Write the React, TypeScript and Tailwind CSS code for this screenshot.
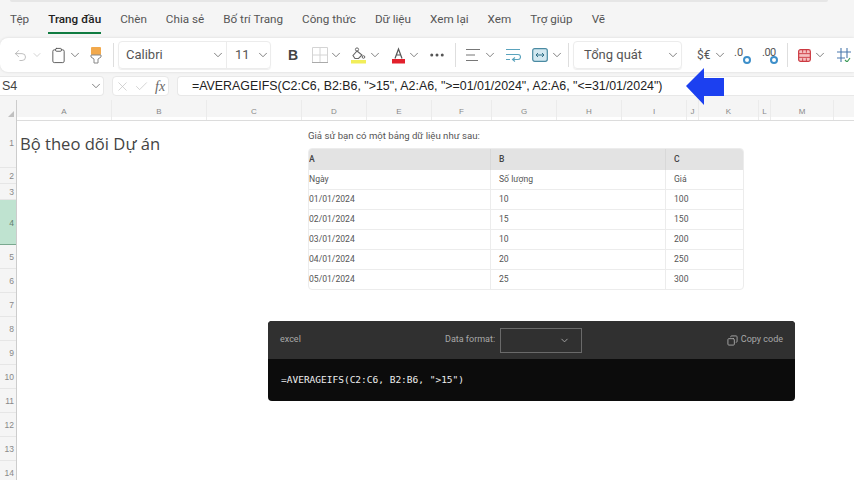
import { Undo2, ChevronDown, Clipboard, X, Check, MoreHorizontal, Copy } from "lucide-react";

const tabs = ["Tệp", "Trang đầu", "Chèn", "Chia sẻ", "Bố trí Trang", "Công thức", "Dữ liệu", "Xem lại", "Xem", "Trợ giúp", "Vẽ"];

const columns = [
  { label: "A", w: "w-[95px]" },
  { label: "B", w: "w-[95px]" },
  { label: "C", w: "w-[95px]" },
  { label: "D", w: "w-[65px]" },
  { label: "E", w: "w-[65px]" },
  { label: "F", w: "w-[60px]" },
  { label: "G", w: "w-[65px]" },
  { label: "H", w: "w-[65px]" },
  { label: "I", w: "w-[65px]" },
  { label: "J", w: "w-[12px]" },
  { label: "K", w: "w-[60px]" },
  { label: "L", w: "w-[12px]" },
  { label: "M", w: "w-[63px]" },
];

const rows = [
  { label: "1", h: "h-[51px]" },
  { label: "2", h: "h-[16px]" },
  { label: "3", h: "h-[16px]" },
  { label: "4", h: "h-[45px]", active: true },
  { label: "5", h: "h-[24px]" },
  { label: "6", h: "h-[24px]" },
  { label: "7", h: "h-[24px]" },
  { label: "8", h: "h-[24px]" },
  { label: "9", h: "h-[24px]" },
  { label: "10", h: "h-[24px]" },
  { label: "11", h: "h-[24px]" },
  { label: "12", h: "h-[24px]" },
  { label: "13", h: "h-[24px]" },
  { label: "14", h: "h-[24px]" },
];

const tableRows = [
  ["Ngày", "Số lượng", "Giá"],
  ["01/01/2024", "10", "100"],
  ["02/01/2024", "15", "150"],
  ["03/01/2024", "10", "200"],
  ["04/01/2024", "20", "250"],
  ["05/01/2024", "25", "300"],
];

const Chevron = ({ className = "" }: { className?: string }) => (
  <ChevronDown size={14} strokeWidth={1.4} className={`shrink-0 text-[#666] ${className}`} />
);

const Divider = ({ className = "" }: { className?: string }) => (
  <div className={`h-[24px] w-px shrink-0 bg-[#dedede] ${className}`} />
);

const Toolbar = () => (
  <div className="flex h-[34px] w-full shrink-0 items-center rounded-l-[8px] bg-white pl-[13px] shadow-[0_0_3px_rgba(0,0,0,0.12)]">
    <Undo2 size={15} strokeWidth={1.3} className="shrink-0 text-[#b0b0b0]" />
    <ChevronDown size={12} strokeWidth={1.4} className="ml-[3px] shrink-0 text-[#c0c0c0]" />
    <Clipboard size={17} strokeWidth={1.3} className="ml-[7px] shrink-0 text-[#555]" />
    <Chevron className="ml-[1px]" />
    <svg width="14" height="18" viewBox="0 0 14 18" className="ml-[7px] shrink-0">
      <rect x="2" y="1" width="10" height="8" rx="1" fill="#f2a94c" />
      <path d="M2 9h10v2l-3 2v4H5v-4l-3-2z" fill="#fff" stroke="#888" strokeWidth="1" />
    </svg>
    <Divider className="ml-[10px] mr-[4px]" />
    <div className="flex h-[28px] w-[153px] shrink-0 items-center rounded-[4px] border border-[#ececec] shadow-[0_1px_1px_rgba(0,0,0,0.07)]">
      <div className="flex h-full w-[108px] items-center border-r border-[#ececec] pl-[7px] pr-[1px]">
        <span className="text-[13px] text-[#555]">Calibri</span>
        <Chevron className="ml-auto" />
      </div>
      <div className="flex h-full flex-1 items-center pl-[8px]">
        <span className="text-[13px] text-[#555]">11</span>
        <Chevron className="ml-auto" />
      </div>
    </div>
    <span className="ml-[17px] w-[10px] shrink-0 font-['Liberation_Sans',sans-serif] text-[14px] font-bold text-[#444]">B</span>
    <svg width="16" height="16" viewBox="0 0 16 16" className="ml-[14px] shrink-0">
      <path d="M.5.5h15v15H.5zM8 .5v15M.5 8h15" fill="none" stroke="#d4d4d4" />
      <path d="M0 15.500h16" stroke="#aaa" />
    </svg>
    <Chevron className="ml-[1px]" />
    <svg width="16" height="17" viewBox="0 0 16 17" className="ml-[8px] shrink-0">
      <circle cx="6" cy="2.500" r="1.600" fill="none" stroke="#666" />
      <path d="M6 4l5 4-3.500 3.500H4L2 8.500z" fill="none" stroke="#666" strokeWidth="1.100" />
      <circle cx="12.500" cy="10" r="1.300" fill="none" stroke="#666" />
      <rect x="0" y="13" width="15" height="3.500" fill="#f2ee5a" />
    </svg>
    <Chevron className="ml-[1px]" />
    <svg width="13" height="17" viewBox="0 0 13 17" className="ml-[10px] shrink-0">
      <path d="M3 11.500L6.500 2l3.500 9.500M4.300 8h4.400" fill="none" stroke="#555" strokeWidth="1.200" />
      <rect x="0" y="12" width="13" height="4.500" fill="#e2202c" />
    </svg>
    <Chevron className="ml-[2px]" />
    <MoreHorizontal size={18} strokeWidth={2} className="ml-[7px] shrink-0 text-[#555]" />
    <Divider className="ml-[9px]" />
    <svg width="15" height="14" viewBox="0 0 15 14" className="ml-[10px] shrink-0">
      <path d="M0 1.500h14M0 7h9M0 12.500h12" fill="none" stroke="#777" strokeWidth="1.200" />
    </svg>
    <Chevron className="ml-[2px]" />
    <svg width="16" height="14" viewBox="0 0 16 14" className="ml-[8px] shrink-0">
      <path d="M1 1.500h14M1 6.500h12a2.500 2.500 0 0 1 0 5H7.500M10 9.500l-2.500 2 2.500 2M1 11.500h4" fill="none" stroke="#5aa3bd" strokeWidth="1.100" />
    </svg>
    <svg width="16" height="14" viewBox="0 0 16 14" className="ml-[11px] shrink-0">
      <rect x=".7" y=".7" width="14.600" height="12.600" rx="2" fill="#d3e8f0" stroke="#4a8aa2" strokeWidth="1.200" />
      <path d="M4 7h8M4 7l2-2M4 7l2 2M12 7l-2-2M12 7l-2 2" fill="none" stroke="#2f6f86" />
    </svg>
    <Chevron className="ml-[2px]" />
    <Divider className="ml-[4px] mr-[4px]" />
    <div className="flex h-[28px] w-[109px] shrink-0 items-center rounded-[4px] border border-[#ececec] pl-[10px] pr-[1px] shadow-[0_1px_1px_rgba(0,0,0,0.07)]">
      <span className="text-[13px] text-[#555]">Tổng quát</span>
      <Chevron className="ml-auto" />
    </div>
    <span className="ml-[15px] w-[13px] shrink-0 whitespace-nowrap text-[12px] text-[#555]">$€</span>
    <Chevron className="ml-[3px]" />
    <div className="relative ml-[7px] h-[18px] w-[17px] shrink-0 text-[11px] leading-[14px] text-[#555]">
      .0
      <span className="absolute bottom-0 right-0 h-[8px] w-[8px] rounded-full border-2 border-[#3d8fca]" />
    </div>
    <div className="relative ml-[11px] h-[18px] w-[16px] shrink-0 whitespace-nowrap text-[11px] leading-[14px] tracking-[-0.5px] text-[#555]">
      .00
      <span className="absolute bottom-0 right-0 h-[8px] w-[8px] rounded-full border-2 border-[#3d8fca]" />
    </div>
    <Divider className="ml-[9px]" />
    <svg width="13" height="13" viewBox="0 0 14 14" className="ml-[10px] shrink-0">
      <rect x=".7" y=".7" width="12.600" height="12.600" rx="2" fill="#f5c0c0" stroke="#cc3a42" strokeWidth="1.300" />
      <path d="M1 5h12M1 9h12M5 1v3M9 1v3M5 10v3M9 10v3" stroke="#cc3a42" />
    </svg>
    <Chevron className="ml-[2px]" />
    <svg width="14" height="14" viewBox="0 0 14 14" className="ml-[10px] shrink-0">
      <path d="M4 0v14M10 0v10M0 4h14M0 10h8" fill="none" stroke="#4a78ad" strokeWidth="1.100" />
      <path d="M8 12l2 2 3-4" fill="none" stroke="#3f9c5a" strokeWidth="1.200" />
    </svg>
  </div>
);

const FormulaBar = () => (
  <div className="flex h-[20px] items-stretch gap-[8px]">
    <div className="flex w-[104px] items-center rounded-r-[4px] border border-l-0 border-[#e8e8e8] bg-white pl-[2px]">
      <span className="font-['Liberation_Sans',sans-serif] text-[12.5px] text-[#444]">S4</span>
      <Chevron className="ml-auto" />
    </div>
    <div className="flex w-[57px] items-center gap-[4px] rounded-[4px] border border-[#e8e8e8] bg-white pl-[2px]">
      <X size={15} strokeWidth={1.1} className="text-[#c0c0c0]" />
      <Check size={15} strokeWidth={1.1} className="text-[#c0c0c0]" />
      <span className="ml-[2px] font-['Liberation_Serif',serif] text-[14px] italic text-[#666]">fx</span>
    </div>
    <div className="flex flex-1 items-center rounded-l-[4px] border border-r-0 border-[#e8e8e8] bg-white pl-[14px]">
      <span className="whitespace-nowrap font-['Liberation_Sans',sans-serif] text-[12.4px] text-[#222]">
        {'=AVERAGEIFS(C2:C6, B2:B6, ">15", A2:A6, ">=01/01/2024", A2:A6, "<=31/01/2024")'}
      </span>
    </div>
  </div>
);

const DataTable = () => (
  <div className="w-[436px] overflow-hidden rounded-[4px] border border-[#ececec] text-[8.6px] text-[#555]">
    <div className="grid h-[21px] grid-cols-[182px_175px_1fr] items-center bg-[#e3e3e3] font-medium text-[#444]">
      <span className="h-full border-r border-[#d8d8d8] leading-[21px]">A</span>
      <span className="h-full border-r border-[#d8d8d8] pl-[8px] leading-[21px]">B</span>
      <span className="pl-[8px]">C</span>
    </div>
    {tableRows.map((row, i) => (
      <div key={row[0]} className={`grid grid-cols-[182px_175px_1fr] items-center ${i > 0 ? "h-[20px] border-t border-[#ececec]" : "h-[19px]"}`}>
        <span className="flex h-full items-center border-r border-[#ececec]">{row[0]}</span>
        <span className="flex h-full items-center border-r border-[#ececec] pl-[8px]">{row[1]}</span>
        <span className="pl-[8px]">{row[2]}</span>
      </div>
    ))}
  </div>
);

const CodeBlock = () => (
  <div className="ml-[251px] mt-[31px] h-[80px] w-[527px] overflow-hidden rounded-[4px] bg-[#0c0c0c]">
    <div className="flex h-[38px] items-center bg-[#303030] px-[12px] text-[9px] text-[#a8a8a8]">
      <span className="w-[165px]">excel</span>
      <span>Data format:</span>
      <div className="ml-[5px] flex h-[25px] w-[82px] items-center justify-end border border-[#6a6a6a] pr-[11px]">
        <ChevronDown size={11} className="text-[#aaa]" />
      </div>
      <Copy size={11} className="ml-auto mr-[3px] -scale-x-100" />
      <span>Copy code</span>
    </div>
    <div className="flex h-[42px] items-center pl-[13px] font-['DejaVu_Sans_Mono',monospace] text-[9.5px] text-[#eee]">
      {'=AVERAGEIFS(C2:C6, B2:B6, ">15")'}
    </div>
  </div>
);

export default function App() {
  return (
    <div className="relative flex h-[480px] w-[854px] flex-col overflow-hidden bg-white font-['Roboto',sans-serif]">
      <div className="flex h-[117px] shrink-0 flex-col bg-[#f5f5f5]">
        <div className="ml-[10px] mr-[26px] h-[2px] shrink-0 rounded-b-[4px] bg-[#e6e6e6]" />
        <div className="flex h-[36px] shrink-0 items-center gap-[19px] pl-[10px] text-[11.7px] text-[#555]">
          {tabs.map((t) => (
            <div key={t} className="relative flex h-full shrink-0 items-center">
              <span className={t === "Trang đầu" ? "font-medium text-[#222]" : ""}>{t}</span>
              {t === "Trang đầu" && <span className="absolute bottom-[4px] left-0 right-0 h-[2px] bg-[#107c41]" />}
            </div>
          ))}
        </div>
        <Toolbar />
        <div className="h-[4px] shrink-0" />
        <FormulaBar />
        <div className="mt-[4px] flex h-[21px] shrink-0 border-b border-[#dcdcdc] text-[8px] text-[#888]">
          <div className="flex h-full w-[17px] shrink-0 items-end justify-end border-r border-[#ccc] pb-[2px] pr-[2px]">
            <span className="h-0 w-0 border-b-[7px] border-l-[7px] border-b-[#c0c0c0] border-l-transparent" />
          </div>
          {columns.map((c) => (
            <div key={c.label} className={`${c.w} flex h-full shrink-0 items-center justify-center border-r border-[#ebebeb] pt-[4px] font-['Liberation_Sans',sans-serif]`}>
              {c.label}
            </div>
          ))}
        </div>
      </div>
      <div className="flex flex-1">
        <div className="w-[17px] shrink-0 border-r border-[#ccc] bg-[#f5f5f5] font-['Liberation_Sans',sans-serif] text-[8.5px] text-[#888]">
          {rows.map((r) => (
            <div
              key={r.label}
              className={`${r.h} flex items-center justify-end border-b pr-[2px] pt-[2px] ${r.active ? "border-[#7aa88f] bg-[#bfe3d0] text-[#5f7f6f]" : "border-[#e6e6e6]"}`}
            >
              {r.label}
            </div>
          ))}
        </div>
        <div className="flex-1">
          <div className="flex pt-[12px]">
            <div className="w-[291px] shrink-0 pl-[3px] pt-[2px] font-['Open_Sans',sans-serif] text-[16.6px] leading-[26px] text-[#444]">
              Bộ theo dõi Dự án
            </div>
            <div>
              <p className="mb-[6px] text-[9.6px] leading-[13px] text-[#555]">Giả sử bạn có một bảng dữ liệu như sau:</p>
              <DataTable />
            </div>
          </div>
          <CodeBlock />
        </div>
      </div>
      {/* blue arrow sits over the formula bar */}
      <svg width="38" height="37" viewBox="0 0 38 37" className="absolute left-[686px] top-[68px]">
        <path d="M0 18L18 0v10h20v18H18v9z" fill="#1c40f0" />
      </svg>
    </div>
  );
}
